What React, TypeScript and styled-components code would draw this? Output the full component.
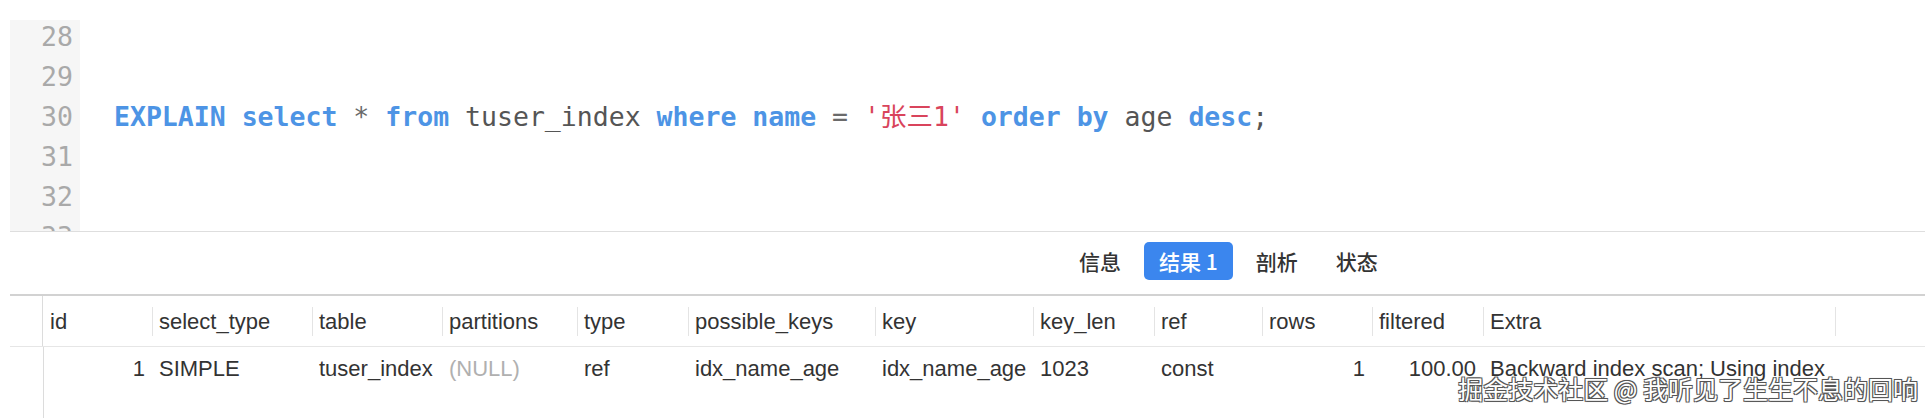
import styled, { createGlobalStyle } from "styled-components"

const GlobalStyle = createGlobalStyle`
  html, body, #root {
    height: 100%;
  }
  body {
    margin: 0;
    background: #ffffff;
    font-family: "Liberation Sans", "Noto Sans CJK SC", sans-serif;
    overflow: hidden;
  }
`

const Page = styled.div`
  height: 100vh;
  display: flex;
  flex-direction: column;
  padding: 20px 7px 0 10px;
  box-sizing: border-box;
  position: relative;
`

const Editor = styled.div`
  display: flex;
  height: 211px;
  overflow: hidden;
  border-bottom: 1px solid #dedede;
  flex-shrink: 0;
  font-family: "DejaVu Sans Mono", "Noto Sans CJK SC", monospace;
  font-size: 26.5px;
`

const Gutter = styled.div`
  width: 70px;
  padding-right: 7px;
  box-sizing: border-box;
  background: #f6f6f6;
  color: #a9a9a9;
  text-align: right;
`

const Lines = styled.div`
  margin-top: -3px;
`

const Line = styled.div`
  height: 40px;
  line-height: 40px;
  white-space: pre;
`

const Code = styled.div`
  flex: 1;
  padding-left: 34px;
`

const Tok = styled.span<{ $kind: "kw" | "id" | "op" | "str" }>`
  color: ${(p) =>
    p.$kind === "kw" ? "#4d94e5" : p.$kind === "str" ? "#d9445c" : p.$kind === "op" ? "#6a6a6a" : "#555555"};
  font-weight: ${(p) => (p.$kind === "kw" ? 700 : 400)};
`

const TabBar = styled.div`
  display: flex;
  align-items: center;
  gap: 8px;
  height: 64px;
  padding-left: 1054px;
  padding-bottom: 4px;
  box-sizing: border-box;
  border-bottom: 2px solid #d2d2d2;
  flex-shrink: 0;
`

const Tab = styled.div<{ $active?: boolean }>`
  height: 38px;
  line-height: 38px;
  padding: 0 15px;
  border-radius: 5px;
  font-family: "Noto Sans CJK SC", sans-serif;
  font-size: 21px;
  font-weight: 500;
  color: ${(p) => (p.$active ? "#ffffff" : "#333333")};
  background: ${(p) => (p.$active ? "#3b86ee" : "transparent")};
`

const cols = "33px 109px 160px 130px 135px 111px 187px 158px 121px 108px 110px 111px 352px 1fr"

const HeaderRow = styled.div`
  display: grid;
  grid-template-columns: ${cols};
  height: 50px;
  border-bottom: 1px solid #e6e6e6;
  flex-shrink: 0;
`

const Corner = styled.div`
  border-right: 1px solid #dcdcdc;
`

const HeaderCell = styled.div`
  display: flex;
  align-items: center;
`

const HeaderLabel = styled.div<{ $sep?: boolean }>`
  height: 29px;
  line-height: 29px;
  padding-left: 6px;
  font-size: 22px;
  color: #333333;
  border-left: 1px solid ${(p) => (p.$sep ? "#e4e4e4" : "transparent")};
  white-space: nowrap;
`

const Body = styled.div`
  flex: 1;
  background-image: linear-gradient(to right, transparent 33px, #dcdcdc 33px, #dcdcdc 34px, transparent 34px);
`

const DataRow = styled.div`
  display: grid;
  grid-template-columns: ${cols};
  height: 44px;
  align-items: center;
`

const Cell = styled.div<{ $right?: boolean; $muted?: boolean }>`
  font-size: 22px;
  color: ${(p) => (p.$muted ? "#b0b0b0" : "#333333")};
  text-align: ${(p) => (p.$right ? "right" : "left")};
  padding: ${(p) => (p.$right ? "0 7px 0 0" : "0 0 0 7px")};
  white-space: nowrap;
`

const Watermark = styled.div`
  position: absolute;
  right: 14px;
  bottom: 12px;
  font-family: "Noto Sans CJK SC", sans-serif;
  font-size: 25px;
  color: #ffffff;
  text-shadow:
    -1px -1px 0 #555, 1px -1px 0 #555, -1px 1px 0 #555, 1px 1px 0 #555,
    0 0 2px rgba(0, 0, 0, 0.5);
  white-space: nowrap;
`

const headers = [
  "id",
  "select_type",
  "table",
  "partitions",
  "type",
  "possible_keys",
  "key",
  "key_len",
  "ref",
  "rows",
  "filtered",
  "Extra",
]

function App() {
  return (
    <>
      <GlobalStyle />
      <Page>
        <Editor>
          <Gutter>
            <Lines>
              {[28, 29, 30, 31, 32, 33].map((n) => (
                <Line key={n}>{n}</Line>
              ))}
            </Lines>
          </Gutter>
          <Code>
            <Lines>
              <Line> </Line>
              <Line> </Line>
              <Line>
                <Tok $kind="kw">EXPLAIN</Tok> <Tok $kind="kw">select</Tok> <Tok $kind="op">*</Tok>{" "}
                <Tok $kind="kw">from</Tok> <Tok $kind="id">tuser_index</Tok> <Tok $kind="kw">where</Tok>{" "}
                <Tok $kind="kw">name</Tok> <Tok $kind="op">=</Tok> <Tok $kind="str">'张三1'</Tok>{" "}
                <Tok $kind="kw">order</Tok> <Tok $kind="kw">by</Tok> <Tok $kind="id">age</Tok>{" "}
                <Tok $kind="kw">desc</Tok>
                <Tok $kind="id">;</Tok>
              </Line>
              <Line> </Line>
              <Line> </Line>
              <Line> </Line>
            </Lines>
          </Code>
        </Editor>

        <TabBar>
          <Tab>信息</Tab>
          <Tab $active>结果 1</Tab>
          <Tab>剖析</Tab>
          <Tab>状态</Tab>
        </TabBar>

        <HeaderRow>
          <Corner />
          {headers.map((h, i) => (
            <HeaderCell key={h}>
              <HeaderLabel $sep={i > 0}>{h}</HeaderLabel>
            </HeaderCell>
          ))}
          <HeaderCell>
            <HeaderLabel $sep />
          </HeaderCell>
        </HeaderRow>

        <Body>
          <DataRow>
            <div />
            <Cell $right>1</Cell>
            <Cell>SIMPLE</Cell>
            <Cell>tuser_index</Cell>
            <Cell $muted>(NULL)</Cell>
            <Cell>ref</Cell>
            <Cell>idx_name_age</Cell>
            <Cell>idx_name_age</Cell>
            <Cell>1023</Cell>
            <Cell>const</Cell>
            <Cell $right>1</Cell>
            <Cell $right>100.00</Cell>
            <Cell>Backward index scan; Using index</Cell>
            <div />
          </DataRow>
        </Body>

        <Watermark>掘金技术社区 @ 我听见了生生不息的回响</Watermark>
      </Page>
    </>
  )
}

export default App
